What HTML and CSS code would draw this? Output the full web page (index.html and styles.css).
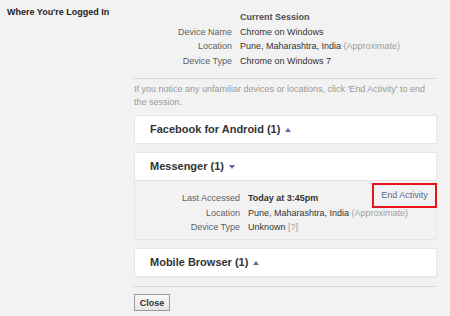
FILE: index.html
```html
<!DOCTYPE html>
<html lang="en">
<head>
  <meta charset="UTF-8" />
  <title>Where You're Logged In</title>
  <link rel="stylesheet" href="styles.css">
</head>
<body>
  <div class="settings">
    <div class="title">Where You're Logged In</div>

    <div class="content">
      <!-- current session -->
      <div class="info current">
        <span class="label"></span>
        <span class="value strong">Current Session</span>
        <span class="label">Device Name</span>
        <span class="value">Chrome on Windows</span>
        <span class="label">Location</span>
        <span class="value">Pune, Maharashtra, India <span class="muted">(Approximate)</span></span>
        <span class="label">Device Type</span>
        <span class="value">Chrome on Windows 7</span>
      </div>

      <div class="notice">If you notice any unfamiliar devices or locations, click 'End Activity' to end the session.</div>

      <div class="panel">
        <div class="panel-head">Facebook for Android (1) <span class="arrow up"></span></div>
      </div>

      <div class="panel">
        <div class="panel-head">Messenger (1) <span class="arrow down"></span></div>
        <div class="panel-body">
          <div class="info session">
            <span class="label">Last Accessed</span>
            <span class="value strong">Today at 3:45pm</span>
            <span class="label">Location</span>
            <span class="value">Pune, Maharashtra, India <span class="muted">(Approximate)</span></span>
            <span class="label">Device Type</span>
            <span class="value">Unknown <span class="muted">[?]</span></span>
          </div>
          <a class="end-activity" href="#">End Activity</a>
        </div>
      </div>

      <div class="panel">
        <div class="panel-head">Mobile Browser (1) <span class="arrow up"></span></div>
      </div>

      <div class="footer">
        <button class="btn">Close</button>
      </div>
    </div>
  </div>
</body>
</html>
```

FILE: styles.css
```css
* {
  margin: 0;
  padding: 0;
  box-sizing: border-box;
}

body {
  font-family: 'Liberation Sans', Arial, sans-serif;
  font-size: 9px;
  color: #333;
  background: #f2f2f2;
}

.settings {
  display: flex;
  padding-top: 7px;
}

.title {
  width: 134px;
  padding-left: 7px;
  font-weight: bold;
  color: #222;
  line-height: 11px;
}

.content {
  width: 302px;
  padding-top: 3px;
}

.info {
  display: grid;
  line-height: 14.5px;
}

.current {
  grid-template-columns: 98px 1fr;
  column-gap: 8px;
  padding-bottom: 10px;
  border-bottom: 1px solid #d8d8d8;
}

.label {
  text-align: right;
  color: #5f5f5f;
}

.value.strong {
  font-weight: bold;
}

.current .value.strong {
  color: #4b4f56;
}

.muted {
  color: #a0a0a0;
}

.notice {
  color: #999;
  line-height: 12.5px;
  padding: 4px 0 8px;
}

.panel {
  margin: 0 0 10px 1px;
  background: #fff;
  box-shadow: 0 0 0 1px #e6e6e6, 0 1px 1px #dcdcdc;
}

.panel-head {
  height: 27px;
  line-height: 27px;
  padding-left: 15px;
  font-size: 11px;
  font-weight: bold;
  color: #333;
}

.arrow {
  display: inline-block;
  width: 0;
  height: 0;
  margin-left: 2px;
  border-left: 3.5px solid transparent;
  border-right: 3.5px solid transparent;
  vertical-align: middle;
}

.arrow.up {
  border-bottom: 4px solid #5b6f9c;
}

.arrow.down {
  border-top: 4px solid #5b6f9c;
}

.panel-body {
  position: relative;
  background: #f2f2f2;
  border-top: 1px solid #e3e3e3;
  height: 59px;
  padding-top: 10px;
}

.session {
  grid-template-columns: 105px 1fr;
  column-gap: 8px;
}

.end-activity {
  position: absolute;
  top: 2px;
  right: -1px;
  width: 65px;
  height: 25px;
  line-height: 21px;
  text-align: center;
  border: 2px solid #e8121a;
  color: #5a6b91;
  text-decoration: none;
}

.footer {
  margin-top: 0;
  border-top: 1px solid #d8d8d8;
  padding-top: 7px;
}

.btn {
  width: 36px;
  height: 17px;
  font-family: 'Liberation Sans', Arial, sans-serif;
  font-size: 9px;
  font-weight: bold;
  color: #333;
  background: linear-gradient(#f8f8f8, #e6e6e6);
  border: 1px solid #999;
  box-shadow: 0 1px 0 rgba(0,0,0,0.1);
}
```
